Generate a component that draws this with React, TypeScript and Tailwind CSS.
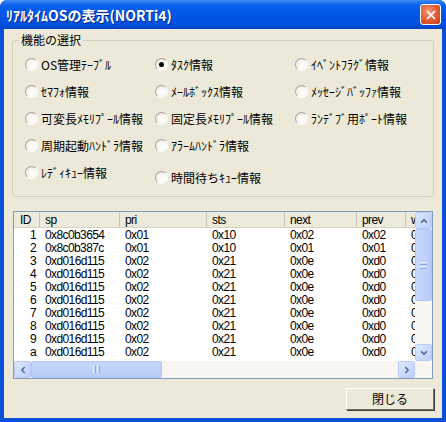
import { ChevronUp, ChevronDown, ChevronLeft, ChevronRight, X } from "lucide-react";

type Opt = { label: string; checked?: boolean; shift?: boolean };

const options: Opt[] = [
  { label: "OS管理ﾃｰﾌﾞﾙ" },
  { label: "ﾀｽｸ情報", checked: true },
  { label: "ｲﾍﾞﾝﾄﾌﾗｸﾞ情報" },
  { label: "ｾﾏﾌｫ情報" },
  { label: "ﾒｰﾙﾎﾞｯｸｽ情報" },
  { label: "ﾒｯｾｰｼﾞﾊﾞｯﾌｧ情報" },
  { label: "可変長ﾒﾓﾘﾌﾟｰﾙ情報" },
  { label: "固定長ﾒﾓﾘﾌﾟｰﾙ情報" },
  { label: "ﾗﾝﾃﾞﾌﾞ用ﾎﾟｰﾄ情報" },
  { label: "周期起動ﾊﾝﾄﾞﾗ情報" },
  { label: "ｱﾗｰﾑﾊﾝﾄﾞﾗ情報" },
  { label: "" },
  { label: "ﾚﾃﾞｨｷｭｰ情報" },
  { label: "時間待ちｷｭｰ情報", shift: true },
  { label: "" },
];

const rows = [
  ["1", "0x8c0b3654", "0x01", "0x10", "0x02", "0x02", "0"],
  ["2", "0x8c0b387c", "0x01", "0x10", "0x01", "0x01", "0"],
  ["3", "0xd016d115", "0x02", "0x21", "0x0e", "0xd0", "0"],
  ["4", "0xd016d115", "0x02", "0x21", "0x0e", "0xd0", "0"],
  ["5", "0xd016d115", "0x02", "0x21", "0x0e", "0xd0", "0"],
  ["6", "0xd016d115", "0x02", "0x21", "0x0e", "0xd0", "0"],
  ["7", "0xd016d115", "0x02", "0x21", "0x0e", "0xd0", "0"],
  ["8", "0xd016d115", "0x02", "0x21", "0x0e", "0xd0", "0"],
  ["9", "0xd016d115", "0x02", "0x21", "0x0e", "0xd0", "0"],
  ["a", "0xd016d115", "0x02", "0x21", "0x0e", "0xd0", "0"],
];

// column widths, written out so tailwind picks them up
const colW = ["w-[26px]", "w-[80px]", "w-[87px]", "w-[78px]", "w-[72px]", "w-[49px]", "w-[40px]"];
const heads = ["ID", "sp", "pri", "sts", "next", "prev", "w"];

const Radio = ({ checked }: { checked?: boolean }) => (
  <span className="flex h-[13px] w-[13px] shrink-0 items-center justify-center rounded-full border border-b-white border-l-[#a7a69b] border-r-white border-t-[#a7a69b] bg-[radial-gradient(circle_at_60%_60%,#ffffff_0%,#f6f5f0_55%,#dcdad0_100%)]">
    {checked && <span className="h-[5px] w-[5px] rounded-full bg-black" />}
  </span>
);

const ArrowBtn = ({ children }: { children: React.ReactNode }) => (
  <div className="flex h-[17px] w-[17px] shrink-0 items-center justify-center rounded-[2px] border border-[#b7cbf5] bg-[linear-gradient(135deg,#dde7fe,#bccffb)]">
    {children}
  </div>
);

const Grip = ({ vertical }: { vertical?: boolean }) =>
  vertical ? (
    <div className="flex flex-col gap-[1px]">
      <span className="h-[1px] w-[7px] bg-[#eef3ff]" />
      <span className="h-[1px] w-[7px] bg-[#8ca9ea]" />
      <span className="h-[1px] w-[7px] bg-[#eef3ff]" />
      <span className="h-[1px] w-[7px] bg-[#8ca9ea]" />
    </div>
  ) : (
    <div className="flex gap-[1px]">
      <span className="h-[7px] w-[1px] bg-[#eef3ff]" />
      <span className="h-[7px] w-[1px] bg-[#8ca9ea]" />
      <span className="h-[7px] w-[1px] bg-[#eef3ff]" />
      <span className="h-[7px] w-[1px] bg-[#8ca9ea]" />
    </div>
  );

export default function App() {
  return (
    <div className="flex h-[422px] w-[446px] flex-col overflow-hidden rounded-t-[7px] bg-[#0a4fd8] font-['Noto_Sans_CJK_JP',sans-serif] text-[12px] text-black">
      {/* title bar */}
      <div className="flex h-[29px] shrink-0 items-center justify-between bg-[linear-gradient(180deg,#3d8cf7_0%,#0a61ec_18%,#0055e5_55%,#0050dc_85%,#0042c4_100%)] pl-[6px] pr-[5px]">
        <span className="text-[14px] font-bold leading-none text-white [text-shadow:1px_1px_#0b2a8c]">
          ﾘｱﾙﾀｲﾑOSの表示(NORTi4)
        </span>
        <div className="flex h-[21px] w-[21px] items-center justify-center rounded-[3px] border border-white bg-[radial-gradient(circle_at_40%_35%,#f29a7a_0%,#e0582f_55%,#c0401e_100%)]">
          <X size={14} strokeWidth={3} color="#ffffff" />
        </div>
      </div>

      {/* client area */}
      <div className="mx-[4px] mb-[4px] flex flex-1 flex-col bg-[#ece9d8] px-[8px]">
        <fieldset className="mt-[4px] h-[164px] rounded-[3px] border border-[#d0d0bf]">
          <legend className="ml-[6px] px-[2px] text-[12px] leading-[14px]">機能の選択</legend>
          <div className="grid grid-cols-[130px_140px_1fr] pl-[12px] pt-[4px]">
            {options.map((o, i) => (
              <div key={i} className={`flex h-[27px] items-center gap-[3px] ${o.shift ? "pt-[10px]" : ""}`}>
                {o.label && (
                  <>
                    <Radio checked={o.checked} />
                    <span className="whitespace-nowrap leading-none">{o.label}</span>
                  </>
                )}
              </div>
            ))}
          </div>
        </fieldset>

        {/* list view */}
        <div className="mx-[1px] mt-[14px] flex h-[168px] flex-col border border-[#7f9db9] bg-white font-['Liberation_Sans',sans-serif] tracking-[-0.6px]">
          <div className="flex min-h-0 flex-1">
            <div className="min-w-0 flex-1 overflow-hidden">
              <div className="flex h-[16px] border-b border-[#d6d3c2] bg-[#ebeadb]">
                {heads.map((h, i) => (
                  <div
                    key={h}
                    className={`${colW[i]} flex shrink-0 items-center overflow-hidden border-r border-[#c7c5b2] leading-none ${i === 0 ? "pl-[6px]" : "pl-[5px]"}`}
                  >
                    {h}
                  </div>
                ))}
              </div>
              {rows.map((r) => (
                <div key={r[0]} className="flex h-[13px] items-center leading-none">
                  {r.map((c, i) => (
                    <div
                      key={i}
                      className={`${colW[i]} shrink-0 ${i === 0 ? "pr-[4px] text-right" : "pl-[5px]"}`}
                    >
                      {c}
                    </div>
                  ))}
                </div>
              ))}
            </div>
            {/* vertical scrollbar */}
            <div className="flex w-[17px] shrink-0 flex-col bg-[#f7f6f1]">
              <ArrowBtn>
                <ChevronUp size={10} strokeWidth={3.5} color="#4d6185" />
              </ArrowBtn>
              <div className="flex h-[72px] items-center justify-center rounded-[2px] border border-[#b2c6f3] bg-[linear-gradient(90deg,#c9d8fd,#b8cbf8)]">
                <Grip vertical />
              </div>
              <div className="flex-1" />
              <ArrowBtn>
                <ChevronDown size={10} strokeWidth={3.5} color="#4d6185" />
              </ArrowBtn>
            </div>
          </div>
          {/* horizontal scrollbar */}
          <div className="flex h-[17px] shrink-0">
            <div className="flex flex-1 bg-[#f7f6f1]">
              <ArrowBtn>
                <ChevronLeft size={10} strokeWidth={3.5} color="#4d6185" />
              </ArrowBtn>
              <div className="flex w-[131px] items-center justify-center rounded-[2px] border border-[#b2c6f3] bg-[linear-gradient(180deg,#c9d8fd,#b8cbf8)]">
                <Grip />
              </div>
              <div className="flex-1" />
              <ArrowBtn>
                <ChevronRight size={10} strokeWidth={3.5} color="#4d6185" />
              </ArrowBtn>
            </div>
            <div className="w-[17px] bg-[#f7f6f1]" />
          </div>
        </div>

        <div className="mt-[9px] flex justify-end">
          <button className="flex h-[22px] w-[88px] items-center justify-center border border-b-[#716f64] border-l-white border-r-[#716f64] border-t-white bg-[#ece9d8] leading-none shadow-[1px_1px_0_#404040]">
            閉じる
          </button>
        </div>
      </div>
    </div>
  );
}
